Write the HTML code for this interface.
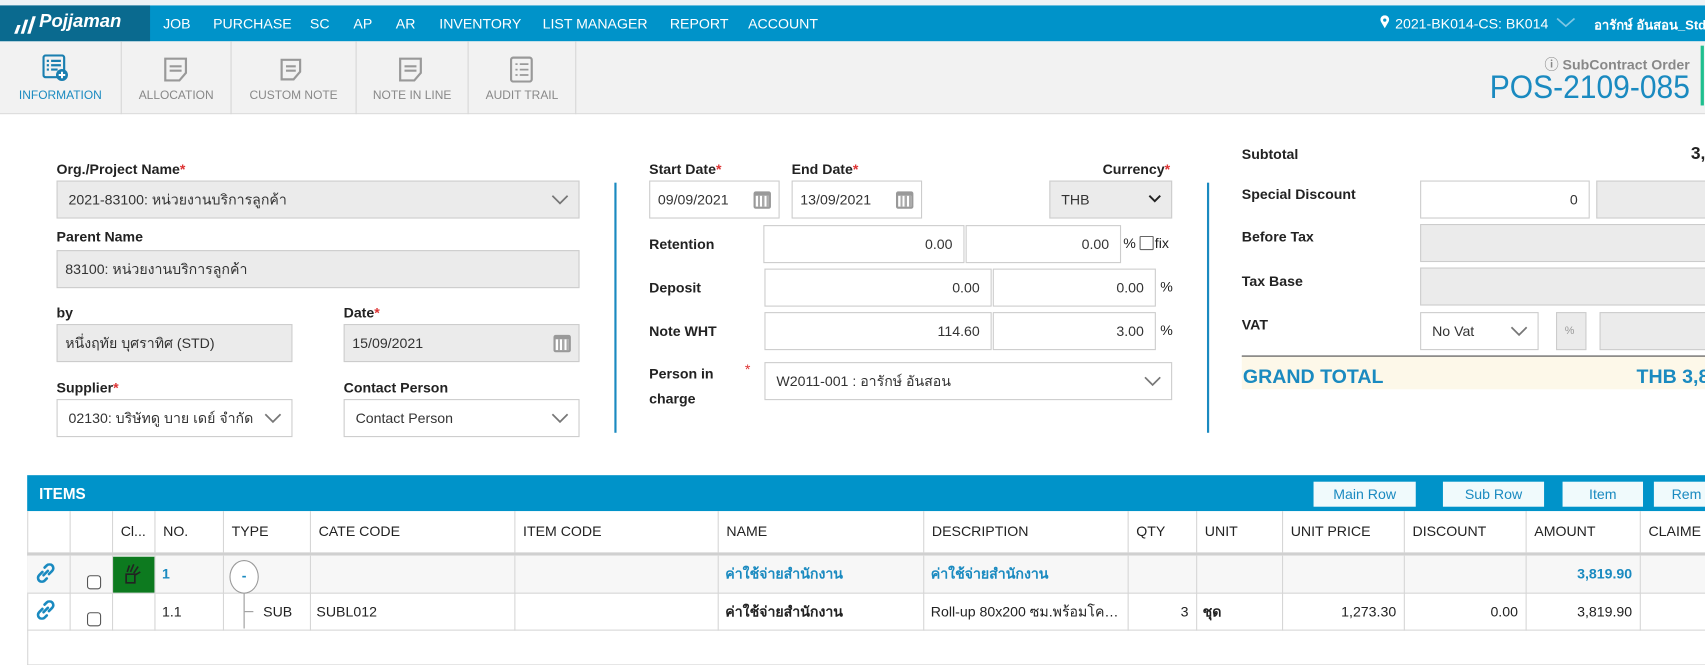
<!DOCTYPE html>
<html><head><meta charset="utf-8">
<style>
*{box-sizing:border-box;margin:0;padding:0}
html,body{width:1705px;height:665px;overflow:hidden;background:#fff}
#w{position:absolute;left:0;top:0;width:1568px;height:612px;transform:scale(1.08737);transform-origin:0 0;font-family:"Liberation Sans","Noto Sans CJK SC",sans-serif;font-size:13px;color:#222;overflow:hidden}
.a{position:absolute}
.nav{color:#fff;font-size:13px;top:14px;white-space:nowrap}
.tab{position:absolute;top:38px;height:67px;border-right:1px solid #d6d6d6;text-align:center;font-size:11px;color:#888}
.tab span{position:absolute;left:0;right:0;top:44px}
.lbl{position:absolute;font-weight:bold;font-size:13px;color:#222}
.req{color:#d33}
.in{position:absolute;border:1px solid #ccc;background:#fff;font-size:13px;color:#333;padding:0 10px;display:flex;align-items:center;white-space:nowrap}
.g{background:#ebebeb}
.r{justify-content:flex-end}
.chev{position:absolute;right:9px;top:50%;margin-top:-5px}
.cal{position:absolute;right:7px;top:50%;margin-top:-8px;width:16px;height:16px;border:2px solid #999;border-top-width:4px;border-radius:2px;background:repeating-linear-gradient(90deg,#fff 0 2px,#aaa 2px 4px)}
.btn{position:absolute;top:443px;height:23px;background:#f0fafc;color:#1a8ac0;font-size:13px;text-align:center;line-height:23px}
.th{position:absolute;top:470px;height:38px;font-size:13px;color:#222;line-height:38px;padding-left:7px;border-left:1px solid #d6d6d6}
.vl{position:absolute;width:1px;background:#d6d6d6}
.c{position:absolute;font-size:13px;line-height:34px}
.cb{position:absolute;width:13px;height:13px;border:1px solid #555;border-radius:3px;background:#fff}
</style></head><body><div id="w">
<!-- top bar -->
<div class="a" style="left:0;top:0;width:1568px;height:5px;background:#eef3f6"></div>
<div class="a" style="left:0;top:5px;width:1568px;height:33px;background:#0093c9"></div>
<div class="a" style="left:0;top:5px;width:138px;height:33px;background:#0a6a8f"></div>
<svg class="a" style="left:12px;top:14px" width="22" height="18" viewBox="0 0 22 18"><path d="M1 17 L4 9 L7 9 L4 17Z M7 17 L11 4 L14 4 L10 17Z M13 17 L18 1 L21 1 L16 17Z" fill="#fff"/></svg>
<div class="a" style="left:36px;top:10px;color:#fff;font-size:17px;font-weight:bold;font-style:italic">Pojjaman</div>
<div class="a nav" style="left:150px">JOB</div>
<div class="a nav" style="left:196px">PURCHASE</div>
<div class="a nav" style="left:285px">SC</div>
<div class="a nav" style="left:325px">AP</div>
<div class="a nav" style="left:364px">AR</div>
<div class="a nav" style="left:404px">INVENTORY</div>
<div class="a nav" style="left:499px">LIST MANAGER</div>
<div class="a nav" style="left:616px">REPORT</div>
<div class="a nav" style="left:688px">ACCOUNT</div>
<svg class="a" style="left:1269px;top:14px" width="9" height="13" viewBox="0 0 9 13"><path d="M4.5 12 L1 6 A4 4 0 1 1 8 6Z" fill="#fff"/><circle cx="4.5" cy="4.5" r="1.5" fill="#0093c9"/></svg>
<div class="a nav" style="left:1283px">2021-BK014-CS: BK014</div>
<svg class="a" style="left:1431px;top:16px" width="18" height="10"><polyline points="1,1 9,8 17,1" fill="none" stroke="#7fc7e4" stroke-width="1.6"/></svg>
<div class="a nav" style="left:1466px;font-weight:bold;font-size:12px;top:14px">อารักษ์ อันสอน_Std</div>
<!-- toolbar -->
<div class="a" style="left:0;top:38px;width:1568px;height:67px;background:#f2f2f2;border-bottom:1px solid #ddd"></div>
<div class="tab" style="left:0;width:112px;color:#1a8ac0"><svg class="a" style="left:39px;top:12px" width="24" height="26" viewBox="0 0 24 26"><rect x="1" y="1" width="19" height="20" rx="2" fill="none" stroke="#1a7fb0" stroke-width="2"/><path d="M4 6h2M8 6h9M4 10h2M8 10h9M4 14h2M8 14h6" stroke="#1a7fb0" stroke-width="2"/><circle cx="18" cy="19" r="5.5" fill="#1a7fb0"/><path d="M18 16v6M15 19h6" stroke="#fff" stroke-width="1.8"/></svg><span>INFORMATION</span></div>
<div class="tab" style="left:112px;width:101px"><svg class="a" style="left:38px;top:14px" width="24" height="24"><path d="M2 2h19v13l-6 7H2z" fill="none" stroke="#999" stroke-width="2"/><path d="M6 9h11M6 13h11" stroke="#999" stroke-width="2"/></svg><span>ALLOCATION</span></div>
<div class="tab" style="left:213px;width:115px"><svg class="a" style="left:44px;top:15px" width="22" height="22"><path d="M2 2h17v11l-6 7H2z" fill="none" stroke="#999" stroke-width="2"/><path d="M6 8h9M6 12h9" stroke="#999" stroke-width="2"/></svg><span>CUSTOM NOTE</span></div>
<div class="tab" style="left:328px;width:103px"><svg class="a" style="left:38px;top:14px" width="24" height="24"><path d="M2 2h19v13l-6 7H2z" fill="none" stroke="#999" stroke-width="2"/><path d="M6 9h11M6 13h11" stroke="#999" stroke-width="2"/></svg><span>NOTE IN LINE</span></div>
<div class="tab" style="left:431px;width:99px"><svg class="a" style="left:38px;top:14px" width="22" height="24"><rect x="1" y="1" width="19" height="22" rx="2" fill="none" stroke="#999" stroke-width="2"/><path d="M5 7h2M9 7h8M5 12h2M9 12h8M5 17h2M9 17h8" stroke="#999" stroke-width="1.6"/></svg><span>AUDIT TRAIL</span></div>
<div class="a" style="right:14px;top:49px;color:#888;font-weight:bold;font-size:13px">&#x24D8; SubContract Order</div>
<div class="a" style="right:14px;top:64px;color:#1a8ac0;font-size:30px;transform:scaleX(0.92);transform-origin:100% 0">POS-2109-085</div>
<div class="a" style="left:1564px;top:42px;width:3px;height:55px;background:#1fbf8f"></div>
<!-- left form -->
<div class="lbl" style="left:52px;top:148px">Org./Project Name<span class="req">*</span></div>
<div class="in g" style="left:52px;top:166px;width:481px;height:35px">2021-83100: หน่วยงานบริการลูกค้า<svg class="chev" width="16" height="10"><polyline points="1,1 8,8 15,1" fill="none" stroke="#777" stroke-width="1.6"/></svg></div>
<div class="lbl" style="left:52px;top:210px">Parent Name</div>
<div class="in g" style="left:52px;top:230px;width:481px;height:35px;padding-left:7px">83100: หน่วยงานบริการลูกค้า</div>
<div class="lbl" style="left:52px;top:280px">by</div>
<div class="in g" style="left:52px;top:298px;width:217px;height:35px;padding-left:7px">หนึ่งฤทัย บุศราทิศ (STD)</div>
<div class="lbl" style="left:316px;top:280px">Date<span class="req">*</span></div>
<div class="in g" style="left:316px;top:298px;width:217px;height:35px;padding-left:7px">15/09/2021<div class="cal"></div></div>
<div class="lbl" style="left:52px;top:349px">Supplier<span class="req">*</span></div>
<div class="in" style="left:52px;top:367px;width:217px;height:35px">02130: บริษัทดู บาย เดย์ จำกัด<svg class="chev" width="16" height="10"><polyline points="1,1 8,8 15,1" fill="none" stroke="#777" stroke-width="1.6"/></svg></div>
<div class="lbl" style="left:316px;top:349px">Contact Person</div>
<div class="in" style="left:316px;top:367px;width:217px;height:35px">Contact Person<svg class="chev" width="16" height="10"><polyline points="1,1 8,8 15,1" fill="none" stroke="#777" stroke-width="1.6"/></svg></div>
<div class="a" style="left:565px;top:168px;width:2px;height:230px;background:#1a8ac0"></div>
<!-- middle -->
<div class="lbl" style="left:597px;top:148px">Start Date<span class="req">*</span></div>
<div class="lbl" style="left:728px;top:148px">End Date<span class="req">*</span></div>
<div class="in" style="left:597px;top:166px;width:120px;height:35px;padding-left:7px">09/09/2021<div class="cal"></div></div>
<div class="in" style="left:728px;top:166px;width:120px;height:35px;padding-left:7px">13/09/2021<div class="cal"></div></div>
<div class="lbl" style="left:1014px;top:148px">Currency<span class="req">*</span></div>
<div class="in g" style="left:965px;top:166px;width:113px;height:35px">THB<svg class="chev" width="12" height="8"><polyline points="1,1 6,6 11,1" fill="none" stroke="#222" stroke-width="1.8"/></svg></div>
<div class="lbl" style="left:597px;top:217px">Retention</div>
<div class="in r" style="left:702px;top:207px;width:185px;height:35px">0.00</div>
<div class="in r" style="left:888px;top:207px;width:143px;height:35px">0.00</div>
<div class="a" style="left:1033px;top:216px">%</div>
<div class="cb" style="left:1048px;top:217px;border-color:#666;border-radius:1px"></div>
<div class="a" style="left:1062px;top:216px">fix</div>
<div class="lbl" style="left:597px;top:257px">Deposit</div>
<div class="in r" style="left:703px;top:247px;width:209px;height:35px">0.00</div>
<div class="in r" style="left:913px;top:247px;width:150px;height:35px">0.00</div>
<div class="a" style="left:1067px;top:256px">%</div>
<div class="lbl" style="left:597px;top:297px">Note WHT</div>
<div class="in r" style="left:703px;top:287px;width:209px;height:35px">114.60</div>
<div class="in r" style="left:913px;top:287px;width:150px;height:35px">3.00</div>
<div class="a" style="left:1067px;top:296px">%</div>
<div class="lbl" style="left:597px;top:332px;line-height:23px">Person in<br>charge</div>
<div class="a req" style="left:685px;top:332px">*</div>
<div class="in" style="left:703px;top:333px;width:375px;height:35px">W2011-001 : อารักษ์ อันสอน<svg class="chev" width="16" height="10"><polyline points="1,1 8,8 15,1" fill="none" stroke="#777" stroke-width="1.6"/></svg></div>
<div class="a" style="left:1110px;top:168px;width:2px;height:230px;background:#1a8ac0"></div>
<!-- right -->
<div class="lbl" style="left:1142px;top:134px">Subtotal</div>
<div class="lbl" style="left:1555px;top:133px;font-size:16px">3,</div>
<div class="lbl" style="left:1142px;top:171px">Special Discount</div>
<div class="in r" style="left:1306px;top:166px;width:156px;height:35px">0</div>
<div class="in g" style="left:1468px;top:166px;width:110px;height:35px"></div>
<div class="lbl" style="left:1142px;top:210px">Before Tax</div>
<div class="in g" style="left:1306px;top:206px;width:270px;height:35px"></div>
<div class="lbl" style="left:1142px;top:251px">Tax Base</div>
<div class="in g" style="left:1306px;top:246px;width:270px;height:35px"></div>
<div class="lbl" style="left:1142px;top:291px">VAT</div>
<div class="in" style="left:1306px;top:287px;width:109px;height:35px">No Vat<svg class="chev" width="16" height="10"><polyline points="1,1 8,8 15,1" fill="none" stroke="#777" stroke-width="1.6"/></svg></div>
<div class="in g" style="left:1431px;top:287px;width:28px;height:35px;font-size:10px;color:#999;padding:0 7px">%</div>
<div class="in g" style="left:1471px;top:287px;width:110px;height:35px"></div>
<div class="a" style="left:1142px;top:327px;width:430px;height:1px;background:#333"></div>
<div class="a" style="left:1142px;top:328px;width:430px;height:30px;background:#fdf8e9"></div>
<div class="a" style="left:1143px;top:336px;color:#1a8ac0;font-weight:bold;font-size:18px">GRAND TOTAL</div>
<div class="a" style="left:1505px;top:336px;color:#1a8ac0;font-weight:bold;font-size:18px;white-space:nowrap">THB 3,8</div>
<!-- items -->
<div class="a" style="left:25px;top:437px;width:1543px;height:33px;background:#0093c9"></div>
<div class="a" style="left:36px;top:446px;color:#fff;font-weight:bold;font-size:14px">ITEMS</div>
<div class="btn" style="left:1208px;width:94px">Main Row</div>
<div class="btn" style="left:1327px;width:93px">Sub Row</div>
<div class="btn" style="left:1437px;width:74px">Item</div>
<div class="btn" style="left:1521px;width:60px">Rem</div>
<div class="a" style="left:25px;top:470px;width:1px;height:142px;background:#d6d6d6"></div>
<div class="a" style="left:25px;top:611px;width:1543px;height:1px;background:#d6d6d6"></div>
<div class="th" style="left:64px;width:39px"></div>
<div class="th" style="left:103px;width:39px">Cl...</div>
<div class="th" style="left:142px;width:63px">NO.</div>
<div class="th" style="left:205px;width:80px">TYPE</div>
<div class="th" style="left:285px;width:188px">CATE CODE</div>
<div class="th" style="left:473px;width:187px">ITEM CODE</div>
<div class="th" style="left:660px;width:189px">NAME</div>
<div class="th" style="left:849px;width:188px">DESCRIPTION</div>
<div class="th" style="left:1037px;width:63px">QTY</div>
<div class="th" style="left:1100px;width:79px">UNIT</div>
<div class="th" style="left:1179px;width:112px">UNIT PRICE</div>
<div class="th" style="left:1291px;width:112px">DISCOUNT</div>
<div class="th" style="left:1403px;width:105px">AMOUNT</div>
<div class="th" style="left:1508px;width:80px">CLAIME</div>
<div class="a" style="left:25px;top:508px;width:1543px;height:3px;background:#d0d0d0"></div>
<div class="a" style="left:25px;top:511px;width:1543px;height:35px;background:#f7f7f7"></div>
<div class="a" style="left:25px;top:545px;width:1543px;height:1px;background:#d6d6d6"></div>
<div class="a" style="left:25px;top:579px;width:1543px;height:1px;background:#d6d6d6"></div>
<div class="vl" style="left:64px;top:511px;height:69px"></div>
<div class="vl" style="left:103px;top:511px;height:69px"></div>
<div class="vl" style="left:142px;top:511px;height:69px"></div>
<div class="vl" style="left:205px;top:511px;height:69px"></div>
<div class="vl" style="left:285px;top:511px;height:69px"></div>
<div class="vl" style="left:473px;top:511px;height:69px"></div>
<div class="vl" style="left:660px;top:511px;height:69px"></div>
<div class="vl" style="left:849px;top:511px;height:69px"></div>
<div class="vl" style="left:1037px;top:511px;height:69px"></div>
<div class="vl" style="left:1100px;top:511px;height:69px"></div>
<div class="vl" style="left:1179px;top:511px;height:69px"></div>
<div class="vl" style="left:1291px;top:511px;height:69px"></div>
<div class="vl" style="left:1403px;top:511px;height:69px"></div>
<div class="vl" style="left:1508px;top:511px;height:69px"></div>
<!-- row1 -->
<svg class="a" style="left:33px;top:518px" width="18" height="18" viewBox="0 0 18 18"><g fill="none" stroke="#1a8ac0" stroke-width="2.4" stroke-linecap="round"><path d="M8 4l2-2a3 3 0 0 1 5 5l-3 3"/><path d="M10 14l-2 2a3 3 0 0 1-5-5l3-3"/><path d="M7 11l4-4"/></g></svg>
<div class="cb" style="left:80px;top:529px"></div>
<div class="a" style="left:104px;top:512px;width:38px;height:33px;background:#0d7a1f"></div>
<svg class="a" style="left:112px;top:516px" width="20" height="24"><path d="M4 12h8v8H4z M5 10l2-6 M8 10l3-7 M11 11l4-6 M12 13l5-3" stroke="#222" stroke-width="1.5" fill="none"/></svg>
<div class="c" style="left:149px;top:511px;color:#1a8ac0;font-weight:bold">1</div>
<div class="a" style="left:211px;top:515px;width:27px;height:31px;border:1px solid #999;border-radius:50%;background:#fff;color:#1a8ac0;text-align:center;line-height:28px;font-weight:bold">-</div>
<div class="a" style="left:224px;top:546px;width:1px;height:32px;background:#999"></div>
<div class="a" style="left:225px;top:562px;width:8px;height:1px;background:#999"></div>
<div class="c" style="left:667px;top:511px;color:#1a8ac0;font-weight:bold">ค่าใช้จ่ายสำนักงาน</div>
<div class="c" style="left:856px;top:511px;color:#1a8ac0;font-weight:bold">ค่าใช้จ่ายสำนักงาน</div>
<div class="c" style="left:1403px;top:511px;width:98px;text-align:right;color:#1a8ac0;font-weight:bold">3,819.90</div>
<!-- row2 -->
<svg class="a" style="left:33px;top:552px" width="18" height="18" viewBox="0 0 18 18"><g fill="none" stroke="#1a8ac0" stroke-width="2.4" stroke-linecap="round"><path d="M8 4l2-2a3 3 0 0 1 5 5l-3 3"/><path d="M10 14l-2 2a3 3 0 0 1-5-5l3-3"/><path d="M7 11l4-4"/></g></svg>
<div class="cb" style="left:80px;top:563px"></div>
<div class="c" style="left:149px;top:546px">1.1</div>
<div class="c" style="left:242px;top:546px">SUB</div>
<div class="c" style="left:291px;top:546px">SUBL012</div>
<div class="c" style="left:667px;top:546px;font-weight:bold">ค่าใช้จ่ายสำนักงาน</div>
<div class="c" style="left:856px;top:546px;width:178px;white-space:nowrap;overflow:hidden;text-overflow:ellipsis">Roll-up 80x200 ซม.พร้อมโครงสร้าง</div>
<div class="c" style="left:1037px;top:546px;width:56px;text-align:right">3</div>
<div class="c" style="left:1106px;top:546px;font-weight:bold">ชุด</div>
<div class="c" style="left:1179px;top:546px;width:105px;text-align:right">1,273.30</div>
<div class="c" style="left:1291px;top:546px;width:105px;text-align:right">0.00</div>
<div class="c" style="left:1403px;top:546px;width:98px;text-align:right">3,819.90</div>
</div></body></html>
